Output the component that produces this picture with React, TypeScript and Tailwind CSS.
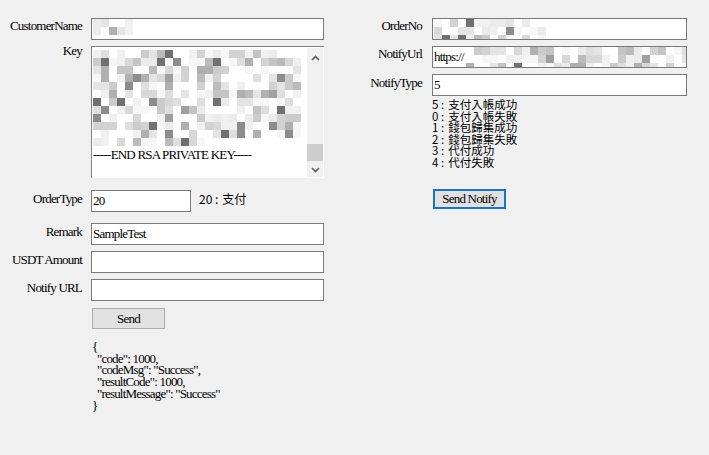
import type { ReactNode } from "react";

const PALETTE = [
  "#ffffff", "#f6f6f6", "#f0f0f0", "#ebebeb", "#e4e4e4", "#dedede", "#d8d8d8",
  "#d2d2d2", "#cbcbcb", "#c4c4c4", "#bbbbbb", "#b0b0b0", "#a0a0a0", "#8c8c8c", "#707070",
];

function grays(n: number, seed: number) {
  let s = seed;
  const out: string[] = [];
  for (let i = 0; i < n; i++) {
    s = (s * 9301 + 49297) % 233280;
    const r = s / 233280;
    // weight towards light values
    const idx = Math.floor(Math.pow(r, 2.2) * PALETTE.length);
    out.push(PALETTE[Math.min(idx, PALETTE.length - 1)]);
  }
  return out;
}

function Mosaic({ cols, rows, seed, last }: { cols: number; rows: number; seed: number; last?: number }) {
  const cells = grays(cols * rows, seed);
  return (
    <div className="flex flex-col">
      {Array.from({ length: rows }).map((_, r) => (
        <div key={r} className="flex">
          {cells.slice(r * cols, r * cols + (r === rows - 1 && last ? last : cols)).map((c, i) => (
            <div key={i} className="h-[8px] w-[8px] shrink-0" style={{ backgroundColor: c }} />
          ))}
        </div>
      ))}
    </div>
  );
}

function Label({ children, w, className = "" }: { children: ReactNode; w: string; className?: string }) {
  return <div className={`${w} shrink-0 text-right leading-[14px] ${className}`}>{children}</div>;
}

function Box({ children, className = "" }: { children?: ReactNode; className?: string }) {
  return (
    <div className={`h-[22px] overflow-hidden border border-[#7a7a7a] bg-white pl-[1px] leading-[19px] ${className}`}>
      {children}
    </div>
  );
}

function Chevron({ up }: { up?: boolean }) {
  return (
    <svg width="9" height="6" viewBox="0 0 9 6" className="text-[#606060]">
      <path d={up ? "M1 5 L4.5 1.5 L8 5" : "M1 1 L4.5 4.5 L8 1"} fill="none" stroke="currentColor" strokeWidth="1.6" />
    </svg>
  );
}

function Code({ k, text }: { k: string; text: string }) {
  return (
    <div className="flex">
      <span>{k} :</span>
      <span className="ml-[4px]">{text}</span>
    </div>
  );
}

const notifyTypes: [string, string][] = [
  ["5", "支付入帳成功"],
  ["0", "支付入帳失敗"],
  ["1", "錢包歸集成功"],
  ["2", "錢包歸集失敗"],
  ["3", "代付成功"],
  ["4", "代付失敗"],
];

const json = `{
  "code": 1000,
  "codeMsg": "Success",
  "resultCode": 1000,
  "resultMessage": "Success"
}`;

export default function App() {
  return (
    <div
      className="flex h-[455px] w-[709px] bg-[#f0f0f0] text-[13px] tracking-[-0.8px] text-black"
      style={{ fontFamily: '"Liberation Serif", "Noto Sans CJK TC", serif' }}
    >
      {/* left column */}
      <div className="flex w-[340px] shrink-0 flex-col pt-[18px]">
        <div className="flex">
          <Label w="w-[82px]" className="pt-[1px]">CustomerName</Label>
          <Box className="ml-[9px] w-[233px]">
            <Mosaic cols={5} rows={2} seed={7} />
          </Box>
        </div>

        <div className="mt-[6px] flex">
          <Label w="w-[82px]" className="-mt-[2px]">Key</Label>
          <div className="ml-[9px] flex h-[132px] w-[233px] border-t border-l border-[#828282] border-r-[#e3e3e3] border-b-[#e3e3e3] bg-white">
            <div className="flex flex-1 flex-col pl-[1px] pt-[3px]">
              <Mosaic cols={26} rows={12} seed={31} last={15} />
              <div className="mt-[2px] leading-[14px]">-----END RSA PRIVATE KEY-----</div>
            </div>
            <div className="my-[1px] mr-[1px] flex w-[16px] flex-col items-center bg-[#f0f0f0]">
              <div className="mt-[7px]">
                <Chevron up />
              </div>
              <div className="flex-1" />
              <div className="h-[17px] w-[16px] bg-[#cdcdcd]" />
              <div className="mt-[6px] mb-[4px]">
                <Chevron />
              </div>
            </div>
          </div>
        </div>

        <div className="mt-[12px] flex">
          <Label w="w-[82px]" className="pt-[2px]">OrderType</Label>
          <Box className="ml-[9px] w-[100px]">20</Box>
          <div
            className="ml-[8px] pt-[2px] text-[12px] leading-[14px] tracking-normal"
            style={{ fontFamily: '"Noto Sans CJK TC", sans-serif' }}
          >
            <Code k="20" text="支付" />
          </div>
        </div>

        <div className="mt-[11px] flex">
          <Label w="w-[82px]" className="pt-[2px]">Remark</Label>
          <Box className="ml-[9px] w-[233px]">SampleTest</Box>
        </div>

        <div className="mt-[6px] flex">
          <Label w="w-[82px]" className="pt-[2px]">USDT Amount</Label>
          <Box className="ml-[9px] w-[233px]" />
        </div>

        <div className="mt-[6px] flex">
          <Label w="w-[82px]" className="pt-[2px]">Notify URL</Label>
          <Box className="ml-[9px] w-[233px]" />
        </div>

        <button className="mt-[7px] ml-[92px] h-[21px] w-[73px] border border-[#adadad] bg-[#e1e1e1] leading-[19px]">
          Send
        </button>

        <pre
          className="mt-[12px] ml-[92px] text-[13px] leading-[11.7px] tracking-[-0.8px]"
          style={{ fontFamily: '"Liberation Serif", serif' }}
        >
          {json}
        </pre>
      </div>

      {/* right column */}
      <div className="flex flex-1 flex-col pt-[18px]">
        <div className="flex">
          <Label w="w-[82px]" className="pt-[1px]">OrderNo</Label>
          <Box className="ml-[10px] w-[255px]">
            <Mosaic cols={14} rows={3} seed={53} />
          </Box>
        </div>

        <div className="mt-[6px] flex">
          <Label w="w-[82px]" className="pt-[1px]">NotifyUrl</Label>
          <Box className="ml-[10px] flex w-[255px]">
            <span className="shrink-0">https://</span>
            <div className="ml-[2px]">
              <Mosaic cols={28} rows={3} seed={97} />
            </div>
          </Box>
        </div>

        <div className="mt-[6px] flex">
          <Label w="w-[82px]" className="pt-[2px]">NotifyType</Label>
          <Box className="ml-[10px] w-[255px]">5</Box>
        </div>

        <div
          className="mt-[3px] ml-[92px] flex flex-col text-[11.5px] leading-[11.6px] tracking-normal"
          style={{ fontFamily: '"Noto Sans CJK TC", sans-serif' }}
        >
          {notifyTypes.map(([k, t]) => (
            <Code key={k} k={k} text={t} />
          ))}
        </div>

        <button className="mt-[20px] ml-[93px] h-[20px] w-[73px] border-2 border-[#1c74c0] bg-[#e1e1e1] leading-[16px]">
          Send Notify
        </button>
      </div>
    </div>
  );
}
